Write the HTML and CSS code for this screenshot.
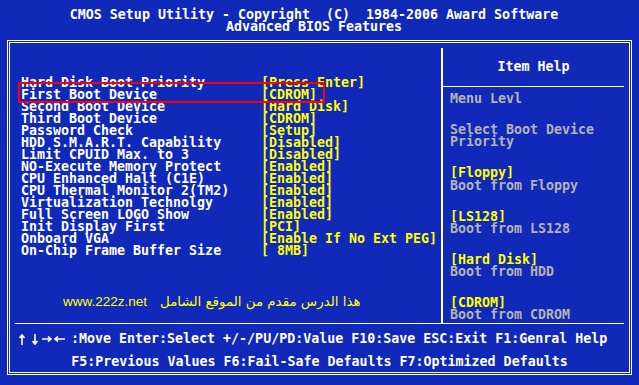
FILE: index.html
```html
<!DOCTYPE html>
<html>
<head>
<meta charset="utf-8">
<link rel="stylesheet" href="styles.css">
</head>
<body>
<div class="screen">
  <header class="title">
    <div class="line">CMOS Setup Utility - Copyright  (C)  1984-2006 Award Software</div>
    <div class="line">Advanced BIOS Features</div>
  </header>
  <div class="frame">
    <div class="top">
      <section class="main">
        <div class="rows">
          <span class="lbl">Hard Disk Boot Priority</span><span class="val">[Press Enter]</span>
          <span class="lbl">First Boot Device</span><span class="val">[CDROM]</span>
          <span class="lbl">Second Boot Device</span><span class="val">[Hard Disk]</span>
          <span class="lbl">Third Boot Device</span><span class="val">[CDROM]</span>
          <span class="lbl">Password Check</span><span class="val">[Setup]</span>
          <span class="lbl">HDD S.M.A.R.T. Capability</span><span class="val">[Disabled]</span>
          <span class="lbl">Limit CPUID Max. to 3</span><span class="val">[Disabled]</span>
          <span class="lbl">NO-Execute Memory Protect</span><span class="val">[Enabled]</span>
          <span class="lbl">CPU Enhanced Halt (C1E)</span><span class="val">[Enabled]</span>
          <span class="lbl">CPU Thermal Monitor 2(TM2)</span><span class="val">[Enabled]</span>
          <span class="lbl">Virtualization Technolgy</span><span class="val">[Enabled]</span>
          <span class="lbl">Full Screen LOGO Show</span><span class="val">[Enabled]</span>
          <span class="lbl">Init Display First</span><span class="val">[PCI]</span>
          <span class="lbl">Onboard VGA</span><span class="val">[Enable If No Ext PEG]</span>
          <span class="lbl">On-Chip Frame Buffer Size</span><span class="val">[ 8MB]</span>
        </div>
        <div class="promo">
          <span class="site">www.222z.net</span>
          <span class="arabic" dir="rtl">هذا الدرس مقدم من الموقع الشامل</span>
        </div>
        <div class="highlight"></div>
      </section>
      <aside class="help">
        <div class="help-title">Item Help</div>
        <div class="help-body">
          <div class="grp"><div class="g">Menu Levl</div></div>
          <div class="grp"><div class="g">Select Boot Device</div><div class="g">Priority</div></div>
          <div class="grp"><div class="y">[Floppy]</div><div class="g">Boot from Floppy</div></div>
          <div class="grp"><div class="y">[LS128]</div><div class="g">Boot from LS128</div></div>
          <div class="grp"><div class="y">[Hard Disk]</div><div class="g">Boot from HDD</div></div>
          <div class="grp"><div class="y">[CDROM]</div><div class="g">Boot from CDROM</div></div>
        </div>
      </aside>
    </div>
    <footer class="keys">
      <div class="keys-line first">
        <svg class="arr up" width="6" height="11" viewBox="0 0 6 11"><path d="M3 1V11M0.5 4L3 1L5.5 4" fill="none" stroke="#fff" stroke-width="1.6"/></svg>
        <svg class="arr dn" width="6" height="11" viewBox="0 0 6 11"><path d="M3 0V10M0.5 7L3 10L5.5 7" fill="none" stroke="#fff" stroke-width="1.6"/></svg>
        <svg class="arr rt" width="10" height="6" viewBox="0 0 10 6"><path d="M0 3H9M6 0.5L9 3L6 5.5" fill="none" stroke="#fff" stroke-width="1.6"/></svg>
        <svg class="arr lt" width="11" height="6" viewBox="0 0 11 6"><path d="M11 3H1M4 0.5L1 3L4 5.5" fill="none" stroke="#fff" stroke-width="1.6"/></svg>
        <span class="ktxt">:Move Enter:Select +/-/PU/PD:Value F10:Save ESC:Exit F1:Genral Help</span>
      </div>
      <div class="keys-line second">F5:Previous Values F6:Fail-Safe Defaults F7:Optimized Defaults</div>
    </footer>
  </div>
</div>
</body>
</html>
```
FILE: styles.css
```css
html, body {
  margin: 0;
  padding: 0;
}
body {
  background: #1129b8;
  width: 639px;
  height: 385px;
  overflow: hidden;
  font-family: "DejaVu Sans Mono", "Liberation Mono", monospace;
  font-weight: bold;
  font-size: 13.3px;
  color: #ffffff;
}
.screen {
  width: 639px;
  height: 385px;
}
.title {
  height: 40px;
  box-sizing: border-box;
  padding-top: 9px;
  padding-right: 11px;
  text-align: center;
  line-height: 12px;
}
.line { white-space: pre; }
.frame {
  margin-left: 7px;
  width: 619px;
  height: 329px;
  border: 3px double #ffffff;
  display: flex;
  flex-direction: column;
}
.top {
  margin: 5px 5px 0 5px;
  height: 275px;
  flex: none;
  border-bottom: 1px solid #ffffff;
  display: flex;
}
.main {
  position: relative;
  width: 420px;
  padding-left: 6px;
  border-right: 2px solid #ffffff;
}
.rows {
  margin-top: 29px;
  display: grid;
  grid-template-columns: 240px auto;
  line-height: 12px;
}
.lbl { color: #ffffff; white-space: pre; }
.val { color: #ffff00; white-space: pre; }
.promo {
  margin-top: 38px;
  padding-left: 42px;
  display: flex;
  align-items: center;
  gap: 13px;
  line-height: 14px;
  color: #ffff00;
  font-weight: normal;
}
.site {
  font-family: "Liberation Sans", Arial, sans-serif;
  font-size: 13.5px;
}
.arabic {
  font-family: "DejaVu Sans", sans-serif;
  font-size: 13.4px;
}
.highlight {
  position: absolute;
  left: 3px;
  top: 34px;
  width: 307px;
  height: 21px;
  box-sizing: border-box;
  border: 2px solid #ff0000;
}
.help {
  width: 181px;
  display: flex;
  flex-direction: column;
}
.help-title {
  height: 38px;
  flex: none;
  border-bottom: 1px solid #ffffff;
  display: flex;
  align-items: center;
  justify-content: center;
  line-height: 12px;
}
.help-body {
  padding-top: 6px;
  padding-left: 7px;
  display: flex;
  flex-direction: column;
  gap: 18.7px;
  line-height: 12.3px;
}
.g { color: #b4b4b4; white-space: pre; }
.y { color: #ffff00; white-space: pre; }
.keys {
  padding-top: 9px;
  line-height: 12px;
}
.keys-line.first {
  display: flex;
  align-items: center;
  padding-left: 9px;
  height: 12px;
}
.arr { display: block; flex: none; }
.arr.dn { margin-left: 7px; }
.arr.rt { margin-left: 4px; }
.arr.lt { margin-left: 2px; }
.ktxt { margin-left: 6px; white-space: pre; }
.keys-line.second {
  margin-top: 10.7px;
  text-align: center;
  white-space: pre;
}
```
